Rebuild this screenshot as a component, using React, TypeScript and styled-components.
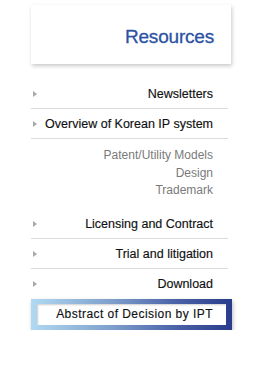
import React from "react";
import styled, { createGlobalStyle } from "styled-components";

const GlobalStyle = createGlobalStyle`
  html, body {
    margin: 0;
    padding: 0;
    background: #fff;
  }
  body {
    font-family: "Liberation Sans", Arial, sans-serif;
  }
`;

const Sidebar = styled.div`
  width: 201px;
  padding: 5px 0 0 31px;
  display: flex;
  flex-direction: column;
`;

const Header = styled.div`
  width: 200px;
  height: 59px;
  box-sizing: border-box;
  background: #fff;
  box-shadow: 1px 2px 4px rgba(0, 0, 0, 0.22);
  display: flex;
  align-items: center;
  justify-content: flex-end;
  padding: 4px 17px 0 0;
`;

const Title = styled.h2`
  margin: 0;
  font-size: 19px;
  font-weight: normal;
  color: #2c52a3;
  -webkit-text-stroke: 0.3px #2c52a3;
  letter-spacing: -0.2px;
`;

const Menu = styled.ul`
  list-style: none;
  margin: 15px 0 0;
  padding: 0;
  width: 197px;
  display: flex;
  flex-direction: column;
`;

const Row = styled.li<{ $last?: boolean }>`
  height: 30px;
  box-sizing: border-box;
  border-bottom: ${(p) => (p.$last ? "none" : "1px solid #dcdcdc")};
  display: flex;
  align-items: center;
  justify-content: space-between;
  padding: 1px 15px 0 2px;
  font-size: 12.5px;
  color: #111;
  -webkit-text-stroke: 0.15px #111;
`;

const Arrow = styled.span`
  flex: none;
  width: 0;
  height: 0;
  border-top: 3px solid transparent;
  border-bottom: 3px solid transparent;
  border-left: 4px solid #a8a8a8;
`;

const SubMenu = styled.ul`
  list-style: none;
  margin: 0;
  padding: 8px 15px 9px 0;
  display: flex;
  flex-direction: column;
  align-items: flex-end;
`;

const SubItem = styled.li`
  font-size: 12px;
  line-height: 17.5px;
  color: #7a7a7a;
`;

const Active = styled.div`
  width: 201px;
  height: 31px;
  box-sizing: border-box;
  padding: 5px 6px;
  background: linear-gradient(90deg, #b0d9f1 0%, #7f9fcc 40%, #4a62a8 72%, #2a3c8b 100%);
  box-shadow: 1px 2px 4px rgba(0, 0, 0, 0.25);
  display: flex;
`;

const ActiveInner = styled.div`
  flex: 1;
  background: #fff;
  box-shadow: inset 1px 1px 2px rgba(0, 0, 0, 0.2);
  display: flex;
  align-items: center;
  justify-content: flex-end;
  padding-right: 13px;
  font-size: 12px;
  letter-spacing: 0.45px;
  color: #111;
  -webkit-text-stroke: 0.15px #111;
`;

const topItems = ["Newsletters", "Overview of Korean IP system"];
const subItems = ["Patent/Utility Models", "Design", "Trademark"];
const bottomItems = ["Licensing and Contract", "Trial and litigation", "Download"];

export default function App() {
  return (
    <>
      <GlobalStyle />
      <Sidebar>
        <Header>
          <Title>Resources</Title>
        </Header>
        <Menu>
          {topItems.map((t) => (
            <Row key={t}>
              <Arrow />
              {t}
            </Row>
          ))}
          <li>
            <SubMenu>
              {subItems.map((s) => (
                <SubItem key={s}>{s}</SubItem>
              ))}
            </SubMenu>
          </li>
          {bottomItems.map((t, i) => (
            <Row key={t} $last={i === bottomItems.length - 1}>
              <Arrow />
              {t}
            </Row>
          ))}
        </Menu>
        <Active>
          <ActiveInner>Abstract of Decision by IPT</ActiveInner>
        </Active>
      </Sidebar>
    </>
  );
}
